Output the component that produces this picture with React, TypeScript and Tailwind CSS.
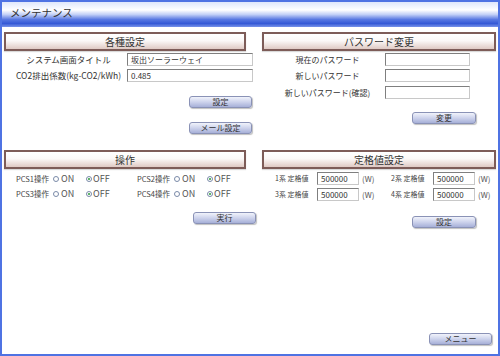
import React from "react";

function SecHead({ children }: { children: React.ReactNode }) {
  return (
    <div className="h-[19px] border-2 border-[#7d5c58] bg-[linear-gradient(to_bottom,#ffffff_0%,#fbf8f7_45%,#dfcac4_100%)] flex items-center justify-center text-[10px] leading-none text-[#333] shadow-[0_1px_1px_rgba(0,0,0,0.15)]">
      {children}
    </div>
  );
}

function Btn({ children, className }: { children: React.ReactNode; className: string }) {
  return (
    <div
      className={
        "h-[12px] rounded-[3px] border border-[#8a92b6] bg-[linear-gradient(to_bottom,#f1f3fb_0%,#cdd3ec_50%,#a7b0d8_100%)] flex items-center justify-center text-[8px] leading-none text-[#333] shadow-[1px_1px_1px_rgba(0,0,0,0.25)] " +
        className
      }
    >
      {children}
    </div>
  );
}

function Inp({ value, className }: { value?: string; className: string }) {
  return (
    <div
      className={
        "h-[13px] shrink-0 border border-[#7f7f7f] border-r-[#c8c8c8] border-b-[#c8c8c8] bg-white flex items-center pl-[3px] text-[8px] leading-none text-[#333] " +
        className
      }
    >
      {value}
    </div>
  );
}

function Radio({ checked }: { checked?: boolean }) {
  return (
    <span className="w-[6px] h-[6px] shrink-0 rounded-full border border-[#7a8aa8] bg-white flex items-center justify-center">
      {checked && <span className="w-[2px] h-[2px] rounded-full bg-[#2a9a3a]" />}
    </span>
  );
}

function PcsGroup({ label }: { label: string }) {
  return (
    <div className="w-[121px] flex items-center shrink-0">
      <div className="w-[37px] shrink-0 text-[7.5px] leading-none text-[#444]">{label}</div>
      <div className="w-[33px] shrink-0 flex items-center gap-[2px] text-[9px] leading-none text-[#555]">
        <Radio />
        <span>ON</span>
      </div>
      <div className="flex items-center gap-[1px] text-[9px] leading-none text-[#555]">
        <Radio checked />
        <span>OFF</span>
      </div>
    </div>
  );
}

function RatedGroup({ label }: { label: string }) {
  return (
    <div className="w-[116px] flex items-center shrink-0">
      <div className="w-[42px] shrink-0 text-[7px] leading-none text-[#444]">{label}</div>
      <Inp value="500000" className="w-[42px]" />
      <div className="ml-[3px] text-[8px] leading-none text-[#555]">(W)</div>
    </div>
  );
}

export default function App() {
  return (
    <div className="w-[500px] h-[356px] border-2 border-[#4f73e3] bg-white flex flex-col overflow-hidden font-['Noto_Sans_CJK_JP',sans-serif] text-[#333]">
      <div className="h-[25px] shrink-0 bg-[linear-gradient(to_bottom,#dfe7fb_0%,#ffffff_32%,#c2d0f7_50%,#5878e2_70%,#3559d6_86%,#7893ea_100%)] flex items-center pl-[8px] pb-[3px] text-[10.5px] leading-none text-[#333]">
        メンテナンス
      </div>

      <div className="px-[2px] pt-[5px] flex flex-col flex-1">
        {/* Row 1 */}
        <div className="h-[118px] shrink-0 grid grid-cols-[242px_234px] gap-x-[16px]">
          <div className="flex flex-col">
            <SecHead>各種設定</SecHead>
            <div className="mt-[2px] flex items-center h-[13px]">
              <div className="w-[123px] shrink-0 pl-[6px] text-center text-[8.5px] leading-none text-[#333] whitespace-nowrap">
                システム画面タイトル
              </div>
              <Inp value="坂出ソーラーウェイ" className="w-[126px]" />
            </div>
            <div className="mt-[3px] flex items-center h-[13px]">
              <div className="w-[123px] shrink-0 pl-[6px] text-center text-[8.5px] leading-none text-[#333] whitespace-nowrap">
                CO2排出係数(kg-CO2/kWh)
              </div>
              <Inp value="0.485" className="w-[126px]" />
            </div>
            <Btn className="ml-[185px] mt-[14px] w-[63px]">設定</Btn>
            <Btn className="ml-[185px] mt-[14px] w-[63px]">メール設定</Btn>
          </div>

          <div className="flex flex-col">
            <SecHead>パスワード変更</SecHead>
            <div className="mt-[2px] flex items-center h-[13px]">
              <div className="w-[123px] shrink-0 pl-[8px] text-center text-[8px] leading-none text-[#333] whitespace-nowrap">
                現在のパスワード
              </div>
              <Inp className="w-[85px]" />
            </div>
            <div className="mt-[3px] flex items-center h-[13px]">
              <div className="w-[123px] shrink-0 pl-[8px] text-center text-[8px] leading-none text-[#333] whitespace-nowrap">
                新しいパスワード
              </div>
              <Inp className="w-[85px]" />
            </div>
            <div className="mt-[4px] flex items-center h-[13px]">
              <div className="w-[123px] shrink-0 pl-[8px] text-center text-[8px] leading-none text-[#333] whitespace-nowrap">
                新しいパスワード(確認)
              </div>
              <Inp className="w-[85px]" />
            </div>
            <Btn className="ml-[150px] mt-[13px] w-[64px]">変更</Btn>
          </div>
        </div>

        {/* Row 2 */}
        <div className="grid grid-cols-[242px_234px] gap-x-[16px]">
          <div className="flex flex-col">
            <SecHead>操作</SecHead>
            <div className="mt-[2px] h-[15px] pl-[12px] flex items-center">
              <PcsGroup label="PCS1操作" />
              <PcsGroup label="PCS2操作" />
            </div>
            <div className="h-[15px] pl-[12px] flex items-center">
              <PcsGroup label="PCS3操作" />
              <PcsGroup label="PCS4操作" />
            </div>
            <Btn className="ml-[189px] mt-[11px] w-[63px]">実行</Btn>
          </div>

          <div className="flex flex-col">
            <SecHead>定格値設定</SecHead>
            <div className="mt-[3px] h-[13px] pl-[13px] flex items-center">
              <RatedGroup label="1系 定格値" />
              <RatedGroup label="2系 定格値" />
            </div>
            <div className="mt-[3px] h-[13px] pl-[13px] flex items-center">
              <RatedGroup label="3系 定格値" />
              <RatedGroup label="4系 定格値" />
            </div>
            <Btn className="ml-[150px] mt-[15px] w-[64px]">設定</Btn>
          </div>
        </div>

        <div className="mt-auto flex justify-end pr-[4px] pb-[9px]">
          <Btn className="w-[63px]">メニュー</Btn>
        </div>
      </div>
    </div>
  );
}
